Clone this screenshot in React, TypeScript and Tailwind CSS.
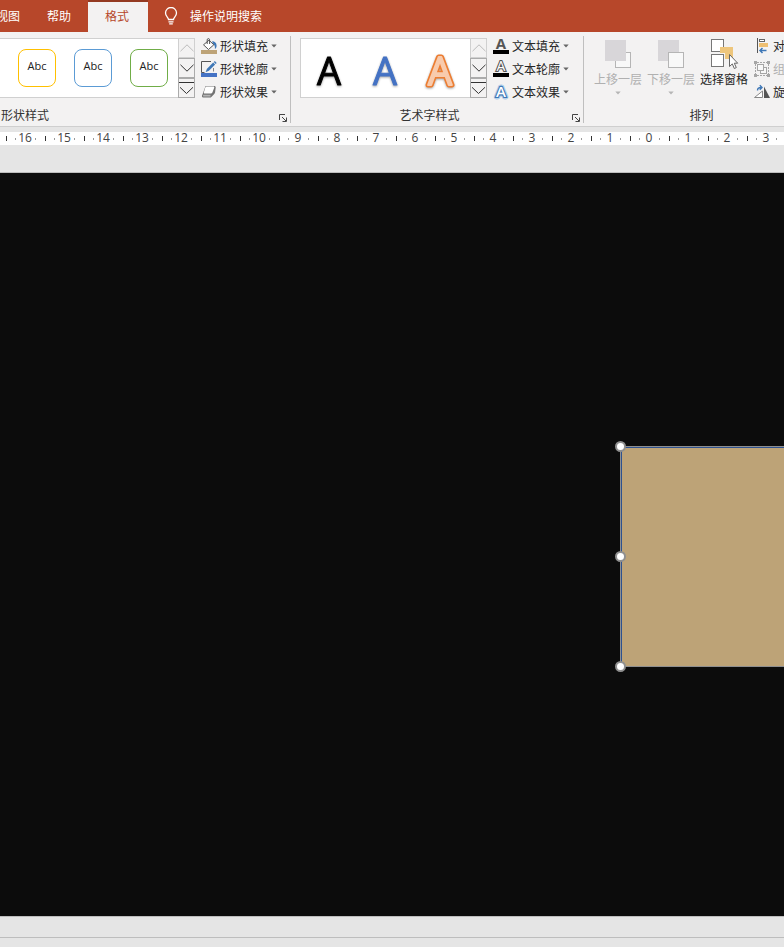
import type { ReactNode } from "react";
import clsx from "clsx";

const RULER_NUMBERS = [16, 15, 14, 13, 12, 11, 10, 9, 8, 7, 6, 5, 4, 3, 2, 1, 0, 1, 2, 3];

const shapeStyles = [
  { key: "gold", border: "border-[#ffc000]" },
  { key: "blue", border: "border-[#5b9bd5]" },
  { key: "green", border: "border-[#70ad47]" },
];

// outline is painted under the fill, so it shows as a rim round the letter
const wordArtStyles = [
  { key: "black", fill: "#000000", outline: "" },
  { key: "blue", fill: "#4472c4", outline: "" },
  { key: "orange", fill: "#f8cbad", outline: "#ed7d31" },
];

/* ---------- icons ---------- */

function BulbIcon() {
  return (
    <svg width="14" height="18" viewBox="0 0 14 18" fill="none" stroke="#fff" strokeWidth="1.3">
      <path d="M4.5 12.5c0-2-3-3.2-3-6.5a5.5 5.5 0 0 1 11 0c0 3.3-3 4.5-3 6.5z" />
      <path d="M4.5 14.8h5M5.2 16.9h3.6" />
    </svg>
  );
}

function CaretIcon({ color = "#666" }: { color?: string }) {
  return (
    <svg className="shrink-0" width="6" height="4" viewBox="0 0 6 4">
      <path d="M0.3 0.5h5.4L3 3.4z" fill={color} />
    </svg>
  );
}

function FillIcon() {
  return (
    <svg width="16" height="16" viewBox="0 0 16 16" fill="none">
      <rect y="12" width="16" height="4" fill="#bda377" />
      <path d="M11 3.2c2.8 0 4.6 1.6 4.6 4.6 0 1.6-.7 2.8-1.7 3.2.2-2.6-.4-4.3-2-5.4z" fill="#3e77b6" />
      <path d="M2.5 6.8 8 2.2l4.8 4.6-5.3 4.7z" fill="#fff" stroke="#555" />
      <path d="M6.2 6V1.8c0-1.6 2.4-1.6 2.4 0V6" stroke="#555" />
    </svg>
  );
}

function OutlineIcon() {
  return (
    <svg width="16" height="16" viewBox="0 0 16 16" fill="none">
      <path d="M10 .5H.5v11h3" stroke="#555" />
      <path d="M12.5 7v3.5" stroke="#888" />
      <rect y="12" width="16" height="4" fill="#4472c4" />
      <path d="M4.5 11.2 6 7.8l6.2-6.2 1.9 1.9-6.2 6.3z" fill="#3e77b6" />
      <path d="m12.8 1 1-.9 1.9 1.9-1 .9z" fill="#3e77b6" />
    </svg>
  );
}

function EffectsIcon() {
  return (
    <svg width="16" height="16" viewBox="0 0 16 16" fill="none">
      <path d="M4.6 2h8.6c1 0 1.6.6 1.5 1.6l-.6 4.6c-.1.8-.4 1.3-.9 1.8l-2.6 2.8c-.5.6-1 .8-1.8.8H2.6c-1.2 0-1.9-.7-1.6-1.8z" fill="#737373" />
      <path d="M5.8 2.5h6.4c.9 0 1.3.5 1 1.3l-1.8 4.8c-.3.7-.8 1-1.6 1H3.9c-.9 0-1.3-.5-1-1.3l1.4-4.7c.3-.7.7-1.1 1.5-1.1z" fill="#fff" />
      <path d="M2.3 10.8h7.2v1.600H2.600c-.5 0-.7-.3-.6-.7z" fill="#b5b5b5" />
    </svg>
  );
}

function LetterIcon({ kind }: { kind: "fill" | "outline" | "effects" }) {
  const effects = kind === "effects";
  return (
    <svg className="overflow-visible" width="16" height="16" viewBox="0 0 16 16" fontFamily="Open Sans, sans-serif" fontWeight="700" textAnchor="middle">
      {kind === "fill" && <text x="8" y="11" fontSize="15" fill="#555">A</text>}
      {kind === "outline" && (
        <text x="8" y="10" fontSize="14" fontWeight="400" fill="#fff" stroke="#555" strokeWidth="2.2" style={{ paintOrder: "stroke" }}>A</text>
      )}
      {effects && (
        <>
          <text aria-hidden="true" x="8" y="13" fontSize="15" fontWeight="400" fill="none" stroke="#b4d0ea" strokeWidth="5" strokeLinejoin="round">A</text>
          <text x="8" y="13" fontSize="15" fontWeight="600" fill="#fff" stroke="#3e77b6" strokeWidth="2.2" style={{ paintOrder: "stroke" }}>A</text>
        </>
      )}
      {!effects && <rect y="12" width="16" height="4" fill="#000" />}
    </svg>
  );
}

function BringForwardIcon() {
  return (
    <svg width="30" height="30" viewBox="0 0 30 30">
      <rect x="12.5" y="13.5" width="15" height="15" fill="#f8f8f8" stroke="#b5b5b5" />
      <rect x="2" y="1" width="21" height="21" fill="#d8d6d9" />
    </svg>
  );
}

function SendBackwardIcon() {
  return (
    <svg width="30" height="30" viewBox="0 0 30 30">
      <rect x="2" y="1" width="21" height="21" fill="#d8d6d9" />
      <rect x="12.5" y="13.5" width="15" height="15" fill="#f8f8f8" stroke="#b5b5b5" />
    </svg>
  );
}

function SelectionPaneIcon() {
  return (
    <svg width="30" height="30" viewBox="0 0 30 30">
      <rect x="2.5" y=".5" width="12" height="12" fill="#fff" stroke="#777" />
      <path d="M11 8h13v12h-8v-6h-5z" fill="#eec67c" />
      <rect x="2.5" y="15.5" width="12" height="12" fill="#fff" stroke="#777" />
      <path d="M20.5 15.5v12l2.8-2.6 2 4.6 2-.9-2-4.4h3.4z" fill="#fff" stroke="#666" />
    </svg>
  );
}

function AlignIcon() {
  return (
    <svg width="16" height="16" viewBox="0 0 16 16" fill="none">
      <path d="M3.5 0v15" stroke="#555" />
      <rect x="5.5" y="1.5" width="5" height="2" fill="#fff" stroke="#666" />
      <rect x="5" y="5" width="9" height="4" fill="#eebf72" />
      <path d="M12.5 12.5H6M8.5 10 6 12.5 8.5 15" stroke="#3e77b6" strokeWidth="1.5" />
    </svg>
  );
}

function GroupIcon() {
  return (
    <svg width="16" height="16" viewBox="0 0 16 16" fill="none" stroke="#a6a6a6">
      <path d="M3 1.5h10M1.5 3v10M3 14.5h10M14.5 3v10" strokeDasharray="2 1" />
      <rect x="6.5" y="6.5" width="6" height="6" fill="#f8f8f8" />
      <rect x="3.5" y="3.5" width="6" height="6" fill="#f8f8f8" />
      <path d="M0 0h3v3H0zM13 0h3v3h-3zM0 13h3v3H0zM13 13h3v3h-3z" fill="#a6a6a6" stroke="none" />
    </svg>
  );
}

function RotateIcon() {
  return (
    <svg width="16" height="16" viewBox="0 0 16 16" fill="none">
      <path d="M8.5 7v6.5h-8z" fill="#fff" stroke="#888" />
      <path d="M10 2.5V14h6z" fill="#555" />
      <path d="M3.5 6.5c0-2 1-3 3.5-3M5.8 1.3 8 3.5 5.8 5.7" stroke="#3e77b6" strokeWidth="1.4" />
    </svg>
  );
}

function LauncherIcon() {
  return (
    <svg width="8" height="8" viewBox="0 0 8 8" fill="none" stroke="#444">
      <path d="M.5 6V.5H6M3 3l4 4M7.5 3.5v4h-4" />
    </svg>
  );
}

/* ---------- ribbon pieces ---------- */

function MenuButton({ icon, label, disabled }: { icon: ReactNode; label: string; disabled?: boolean }) {
  return (
    <button type="button" disabled={disabled} className="flex h-4 items-center whitespace-nowrap text-[#262626] disabled:text-[#b0b0b0]">
      {icon}
      <span className="ml-[3px] mr-[3px]">{label}</span>
      <CaretIcon />
    </button>
  );
}

function ArrangeButton({ icon, label, caret, disabled }: { icon: ReactNode; label: string; caret?: boolean; disabled?: boolean }) {
  return (
    <button
      type="button"
      disabled={disabled}
      className="flex w-12 flex-col items-center whitespace-nowrap pt-px text-[#262626] disabled:text-[#b0b0b0]"
    >
      {icon}
      <span className="mt-0.5 leading-4">{label}</span>
      {caret && <span className="mt-1"><CaretIcon color="#b5b5b5" /></span>}
    </button>
  );
}

function GalleryScroll() {
  const base = "flex h-5 w-[17px] items-center justify-center border";
  return (
    <div className="flex shrink-0 flex-col">
      <button type="button" aria-label="上一行" disabled className={clsx(base, "border-[#d0d0d0]")}>
        <svg width="14" height="8" viewBox="0 0 14 8" fill="none" stroke="#bbb"><path d="M.5 7.2 7 .8l6.500 6.400" /></svg>
      </button>
      <button type="button" aria-label="下一行" className={clsx(base, "border-[#ababab]")}>
        <svg width="14" height="8" viewBox="0 0 14 8" fill="none" stroke="#333"><path d="M.5.8 7 7.2 13.5.8" /></svg>
      </button>
      <button type="button" aria-label="其他" className={clsx(base, "border-[#ababab]")}>
        <svg width="15" height="14" viewBox="0 0 15 14" fill="none" stroke="#333"><path d="M0 1.5h15M1 6.3l6.5 6.2L14 6.3" /></svg>
      </button>
    </div>
  );
}

function GroupLabel({ children, launcher, className }: { children: string; launcher?: boolean; className?: string }) {
  return (
    <div className="mt-[9px] flex h-4 items-end">
      <span className={clsx("flex-1 leading-4 text-[#333]", className)}>{children}</span>
      {launcher && (
        <button type="button" aria-label={`${children}选项`} className="mb-px ml-1 mr-[3px]">
          <LauncherIcon />
        </button>
      )}
    </div>
  );
}

function TabBar() {
  return (
    <nav className="flex h-8 items-stretch whitespace-nowrap bg-[#b7472a] text-white">
      <button type="button" className="-ml-1">视图</button>
      <button type="button" className="ml-2.5 w-[58px]">帮助</button>
      <button type="button" className="w-[60px] border-t-2 border-[#943a22] bg-[#f3f2f2] pb-0.5 pr-0.5 text-[#b7472a]">格式</button>
      <button type="button" className="ml-4 flex items-center gap-3">
        <BulbIcon />
        操作说明搜索
      </button>
    </nav>
  );
}

function Ribbon() {
  return (
    <div className="flex overflow-hidden border-b border-[#cfcfcf] bg-[#f3f2f2] pb-[3px] pt-1">
      <section className="shrink-0 border-r border-[#bfbfbf] pt-0.5">
        <div className="flex h-[60px] gap-1.5 pr-[13px]">
          <div className="flex">
            <div className="flex items-center gap-[18px] border-y border-[#d0d0d0] bg-white pl-[18px] pr-2.5">
              {shapeStyles.map(s => (
                <button
                  key={s.key}
                  type="button"
                  className={clsx("size-[38px] rounded-lg border bg-white pb-1 font-['Open_Sans',sans-serif] text-[11px] text-[#222]", s.border)}
                >
                  Abc
                </button>
              ))}
            </div>
            <GalleryScroll />
          </div>
          <div className="flex flex-col gap-[7px]">
            <MenuButton icon={<FillIcon />} label="形状填充" />
            <MenuButton icon={<OutlineIcon />} label="形状轮廓" />
            <MenuButton icon={<EffectsIcon />} label="形状效果" />
          </div>
        </div>
        <GroupLabel launcher className="pl-px">形状样式</GroupLabel>
      </section>

      <section className="shrink-0 border-r border-[#bfbfbf] pt-0.5">
        <div className="flex h-[60px] gap-1.5 pl-[9px] pr-3.5">
          <div className="flex">
            <div className="flex w-[170px] border-y border-l border-[#d0d0d0] bg-white pr-0.5">
              {wordArtStyles.map(s => (
                <button key={s.key} type="button" className="flex flex-1 items-center justify-center">
                  <svg
                    className="overflow-visible drop-shadow-[0_1px_1px_rgba(0,0,0,0.35)]"
                    width="36"
                    height="56"
                    viewBox="0 0 36 56"
                    textAnchor="middle"
                    fontFamily="Open Sans, sans-serif"
                    fontSize="38"
                    strokeLinejoin="round"
                  >
                    {s.outline && (
                      <text aria-hidden="true" x="18" y="45" fill="none" stroke={s.outline} strokeWidth="5">A</text>
                    )}
                    <text x="18" y="45" fill={s.fill} stroke={s.fill} strokeWidth={s.outline ? 1.8 : 1}>A</text>
                  </svg>
                </button>
              ))}
            </div>
            <GalleryScroll />
          </div>
          <div className="flex flex-col gap-[7px]">
            <MenuButton icon={<LetterIcon kind="fill" />} label="文本填充" />
            <MenuButton icon={<LetterIcon kind="outline" />} label="文本轮廓" />
            <MenuButton icon={<LetterIcon kind="effects" />} label="文本效果" />
          </div>
        </div>
        <GroupLabel launcher className="text-center">艺术字样式</GroupLabel>
      </section>

      <section className="shrink-0 pt-0.5">
        <div className="flex h-[60px] gap-1.5 pl-2.5 pr-[13px]">
          <div className="flex items-start gap-[5px]">
            <ArrangeButton icon={<BringForwardIcon />} label="上移一层" caret disabled />
            <ArrangeButton icon={<SendBackwardIcon />} label="下移一层" caret disabled />
            <ArrangeButton icon={<SelectionPaneIcon />} label="选择窗格" />
          </div>
          <div className="flex flex-col gap-[7px]">
            <MenuButton icon={<AlignIcon />} label="对齐" />
            <MenuButton icon={<GroupIcon />} label="组合" disabled />
            <MenuButton icon={<RotateIcon />} label="旋转" />
          </div>
        </div>
        <GroupLabel className="text-center">排列</GroupLabel>
      </section>
    </div>
  );
}

function Ruler() {
  return (
    <div className="mt-[5px] flex h-[13px] items-center bg-white pl-1.5 font-['Open_Sans',sans-serif] text-xs text-[#444]">
      {RULER_NUMBERS.map((n, i) => (
        <div key={i} className="flex w-[39px] shrink-0 items-center">
          <span className="h-[5px] w-px bg-[#333]" />
          <span className="ml-2 h-0.5 w-px bg-[#999]" />
          <span className="flex w-[19px] justify-center pb-px pr-px">{n}</span>
          <span className="h-0.5 w-px bg-[#999]" />
        </div>
      ))}
    </div>
  );
}

function Handle({ className }: { className: string }) {
  return <span className={clsx("absolute -left-1.5 size-[11px] rounded-full border-2 border-[#8f8f8f] bg-white", className)} />;
}

function Slide() {
  return (
    <main className="relative mt-[27px] flex-1 overflow-hidden border-y border-[#bdbdbd] bg-[#0c0c0c]">
      {/* selected rectangle, runs off the right edge */}
      <div className="absolute left-[620px] right-0 top-[273px] h-[221px] border-y border-l border-[#8f8f8f]">
        <div className="h-full border-l border-t border-[#2f528f] bg-[#bda377]" />
        <Handle className="-top-1.5" />
        <Handle className="top-[104px]" />
        <Handle className="-bottom-1.5" />
      </div>
    </main>
  );
}

export default function App() {
  return (
    <div className="flex min-h-screen flex-col overflow-hidden bg-[#e5e5e5] font-['Noto_Sans_CJK_SC',sans-serif] text-xs">
      <TabBar />
      <Ribbon />
      <Ruler />
      <Slide />
      <footer className="pt-5">
        <div className="h-[10px] border-t border-[#bdbdbd]" />
      </footer>
    </div>
  );
}
